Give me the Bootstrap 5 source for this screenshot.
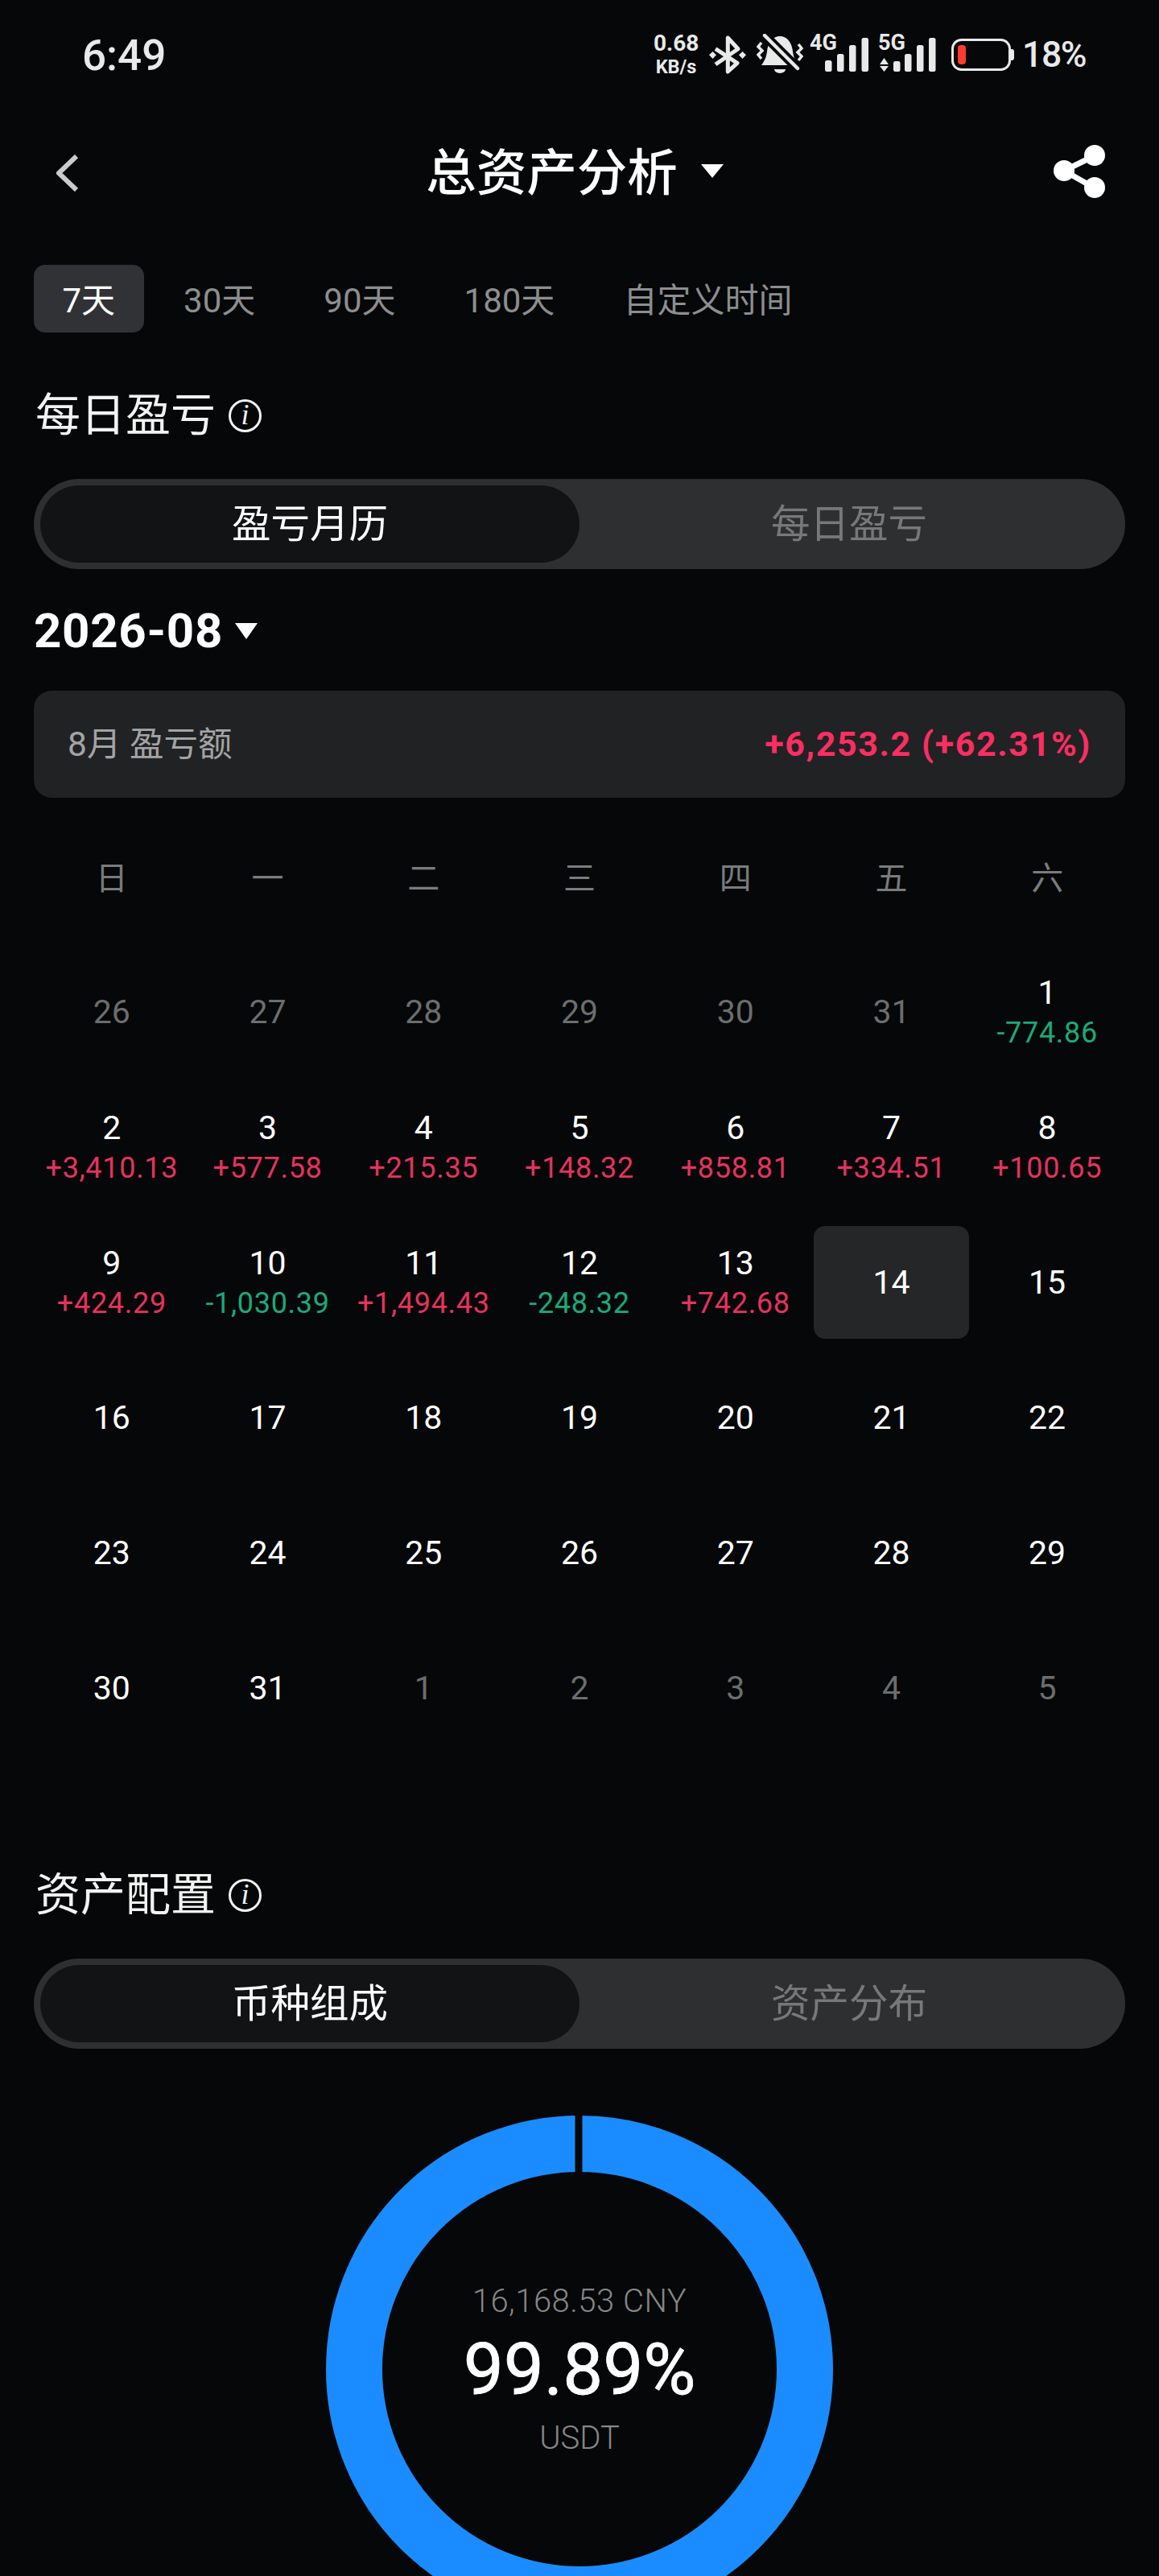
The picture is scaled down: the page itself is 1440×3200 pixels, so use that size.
<!DOCTYPE html>
<html lang="zh-CN">
<head>
  <meta charset="UTF-8">
  <title>总资产分析</title>
  <link href="https://cdn.jsdelivr.net/npm/bootstrap@5.3.3/dist/css/bootstrap.min.css" rel="stylesheet">
  <style>
    html, body { background: #050708; }
    body { font-family: Roboto, "Noto Sans CJK SC", sans-serif; color: #fff; }
    .app-page { height: 3200px; overflow: hidden; }

    /* status bar */
    .sbar { height: 167px; padding: 43px 92px 0 102px; color: #e8e9e9; }
    .sbar-time { font-size: 53px; font-weight: 500; line-height: 52px; }
    .sbar-speed { width: 56px; font-weight: 700; text-align: center; margin-right: 13px; }
    .sbar-speed div:first-child { font-size: 28px; line-height: 22px; }
    .sbar-speed div:last-child { font-size: 23.5px; line-height: 24px; margin-top: 6px; white-space: nowrap; }
    .sbar svg { display: block; fill: #e8e9e9; }
    .sbar svg text { font-family: Roboto, sans-serif; font-weight: 700; font-size: 27px; }
    .sig-ico { margin-top: -8px; }
    .sbar-pct { width: 78px; font-size: 44.5px; font-weight: 500; line-height: 46px; margin-left: 10px; margin-top: 2px; letter-spacing: -1.4px; white-space: nowrap; }

    /* header */
    .top-nav { height: 92px; padding: 0 65px 0 70px; }
    .top-side { flex: 1 1 0; }
    .top-back { margin-top: 4px; }
    .top-title { font-size: 62.5px; line-height: 70px; font-weight: 500; padding-right: 17px; margin-top: 5px; }
    .tri-down { width: 0; height: 0; border-style: solid; border-color: #fff transparent transparent; }
    .top-title-tri { border-width: 17px 14px 0; margin-left: 29px; margin-top: -6px; }
    .month-tri { border-width: 20px 14px 0; margin-left: 15px; }

    /* range tabs */
    .range-tabs { margin: 70px 42px 0; height: 84px; gap: 14px; }
    .range-tab { height: 84px; padding: 0 35.5px; font-size: 42px; line-height: 90px; color: #8c8e8f; border-radius: 14px; }
    .range-tab.is-on { background: #303235; color: #fff; }

    /* section title */
    .sec-title { margin: 73px 42px 0; padding-left: 2px; height: 60px; font-size: 56px; line-height: 60px; color: #f2f2f2; }
    .info-ico { width: 41px; height: 41px; border: 3.5px solid #f2f2f2; border-radius: 50%; margin-left: 16px;
      font: italic 36px/33px "Liberation Serif", serif; text-align: center; }

    /* segmented toggle */
    .seg { margin: 49px 42px 0; height: 112px; padding: 8px; background: #2e2f30; }
    .seg-item { flex: 1 1 0; font-size: 48.5px; color: #77787a; padding-top: 3px; }
    .seg-item.is-on { background: #121314; color: #fff; }

    /* month */
    .month-row { margin: 47px 42px 0; height: 60px; font-size: 60px; line-height: 60px; font-weight: 700; letter-spacing: .7px; }
    .sum-bar { margin: 44px 42px 0; height: 133px; padding: 0 42px; background: #212223; border-radius: 22px; }
    .sum-label { font-size: 42.5px; color: #a3a4a5; }
    .sum-amount { font-size: 43px; font-weight: 700; color: #fb2e62; letter-spacing: 1.6px; }

    /* calendar */
    .week-row { margin: 76px 42px 0; height: 50px; grid-template-columns: repeat(7, 1fr); font-size: 40px; line-height: 50px; color: #7a7b7c; }
    .cal-grid { margin: 70px 42px 0; grid-template-columns: repeat(7, 1fr); grid-auto-rows: 140px; row-gap: 28px; }
    .cal-cell { border-radius: 14px; }
    .cal-cell.is-today { background: #252627; }
    .cal-day { font-size: 41px; line-height: 46px; color: #fff; }
    .cal-cell.is-dim .cal-day { color: #6c6d6e; }
    .cal-val { font-size: 36px; line-height: 44px; letter-spacing: .7px; margin-top: 5px; white-space: nowrap; }
    .val-up { color: #e6325f; }
    .val-down { color: #1ba97c; }

    /* donut */
    .donut-box { width: 630px; height: 630px; margin: 83px auto 0; }
    .donut-text { top: 0; left: 0; width: 100%; height: 100%; }
    .donut-sub { font-size: 40px; line-height: 85px; font-weight: 300; color: #858687; }
    .donut-cny { letter-spacing: .5px; }
    .donut-big { font-size: 89px; line-height: 85px; font-weight: 400; color: #fff; -webkit-text-stroke: .8px #fff; }
  </style>
</head>
<body>
<div class="app-page">

  <div class="sbar d-flex justify-content-between align-items-start">
    <div class="sbar-time">6:49</div>
    <div class="d-flex align-items-start">
      <div class="sbar-speed"><div>0.68</div><div>KB/s</div></div>
      <svg width="46" height="50" viewBox="0 0 46 50" style="margin-right:13px">
        <path d="M8 17.7 35 35.3 23.3 46V4L36 17.7 8 37" fill="none" stroke="#e8e9e9" stroke-width="5" stroke-linejoin="round"/>
        <path d="M4.5 21 9 25.3 4.5 30 0 25.3ZM41.5 21 46 25.3 41.5 30 37 25.3Z"/>
      </svg>
      <svg width="58" height="50" viewBox="0 0 58 50" style="margin-right:8px;margin-top:-1px">
        <path d="M29 3C38 3 44 11 45 22 46 30 48 33 52 39H6C10 33 12 30 13 22 14 11 20 3 29 3Z"/>
        <path d="M22 44H36A7 5 0 0 1 22 44Z"/>
        <path d="M9 1 55 47" stroke="#050708" stroke-width="12"/>
        <path d="M10 2 51 43" stroke="#e8e9e9" stroke-width="4.5" stroke-linecap="round"/>
        <path d="M6 11 2 16 7 21 2 26 6 31M52 13 56 18 51 23 56 28 52 33" fill="none" stroke="#e8e9e9" stroke-width="3.5"/>
      </svg>
      <svg class="sig-ico" width="73" height="54" viewBox="0 -8 73 54" style="margin-right:12px">
        <text x="0" y="19">4G</text>
        <rect x="19" y="32" width="8.5" height="14" rx="2.5"/>
        <rect x="34" y="24" width="8.5" height="22" rx="2.5"/>
        <rect x="49" y="13" width="8.5" height="33" rx="2.5"/>
        <rect x="64.500" y="4" width="8.5" height="42" rx="2.5"/>
      </svg>
      <svg class="sig-ico" width="72" height="54" viewBox="0 -8 72 54" style="margin-right:19px">
        <text x="0" y="19">5G</text>
        <path d="M7.500 29 13 37H2ZM2 39H13L7.500 46Z"/>
        <rect x="19" y="33" width="8.5" height="13" rx="2.5"/>
        <rect x="33" y="24" width="8.5" height="22" rx="2.5"/>
        <rect x="48" y="13" width="8.5" height="33" rx="2.5"/>
        <rect x="63" y="4" width="8.5" height="42" rx="2.5"/>
      </svg>
      <svg width="78" height="42" viewBox="0 0 78 42" style="margin-top:5px">
        <rect x="1.5" y="1.5" width="71" height="37" rx="11" fill="none" stroke="#e8e9e9" stroke-width="3"/>
        <path d="M74 13H75A3 3 0 0 1 78 16V24A3 3 0 0 1 75 27H74Z"/>
        <rect x="8" y="8" width="10" height="24" rx="4" style="fill:#ff3b30"/>
      </svg>
      <div class="sbar-pct">18%</div>
    </div>
  </div>

  <div class="top-nav d-flex align-items-center">
    <div class="top-side">
      <svg width="28" height="46" viewBox="0 0 28 46" class="d-block top-back"><path d="M25 2 3 23 25 44" fill="none" stroke="#c9cbcc" stroke-width="6"/></svg>
    </div>
    <div class="top-title d-flex align-items-center"><span>总资产分析</span><span class="tri-down top-title-tri"></span></div>
    <div class="top-side d-flex justify-content-end">
      <svg width="68" height="68" viewBox="0 0 68 68" class="d-block" fill="#fff">
        <path d="M52 15 15 33 52 54" fill="none" stroke="#fff" stroke-width="7"/>
        <circle cx="53" cy="14" r="13"/><circle cx="15" cy="33" r="13"/><circle cx="53" cy="54" r="13"/>
      </svg>
    </div>
  </div>

  <div class="range-tabs d-flex">
    <div class="range-tab is-on">7天</div>
    <div class="range-tab">30天</div>
    <div class="range-tab">90天</div>
    <div class="range-tab">180天</div>
    <div class="range-tab">自定义时间</div>
  </div>

  <div class="sec-title d-flex align-items-center"><span>每日盈亏</span><span class="info-ico">i</span></div>

  <div class="seg d-flex rounded-pill">
    <div class="seg-item is-on rounded-pill d-flex align-items-center justify-content-center">盈亏月历</div>
    <div class="seg-item d-flex align-items-center justify-content-center">每日盈亏</div>
  </div>

  <div class="month-row d-flex align-items-center"><span>2026-08</span><span class="tri-down month-tri"></span></div>

  <div class="sum-bar d-flex align-items-center justify-content-between">
    <span class="sum-label">8月 盈亏额</span>
    <span class="sum-amount">+6,253.2 (+62.31%)</span>
  </div>

  <div class="week-row d-grid text-center">
    <div>日</div><div>一</div><div>二</div><div>三</div><div>四</div><div>五</div><div>六</div>
  </div>

  <div class="cal-grid d-grid text-center" id="calGrid"></div>

  <div class="sec-title d-flex align-items-center" style="margin-top:157px"><span>资产配置</span><span class="info-ico">i</span></div>

  <div class="seg d-flex rounded-pill">
    <div class="seg-item is-on rounded-pill d-flex align-items-center justify-content-center">币种组成</div>
    <div class="seg-item d-flex align-items-center justify-content-center">资产分布</div>
  </div>

  <div class="donut-box position-relative">
    <svg width="630" height="630" viewBox="0 0 630 630" class="d-block">
      <circle cx="315" cy="315" r="280" fill="none" stroke="#1a8cff" stroke-width="70"/>
      <rect x="309.500" y="0" width="9" height="71" fill="#050708"/>
    </svg>
    <div class="donut-text position-absolute d-flex flex-column align-items-center justify-content-center text-center">
      <div class="donut-sub donut-cny">16,168.53 CNY</div>
      <div class="donut-big">99.89%</div>
      <div class="donut-sub">USDT</div>
    </div>
  </div>
</div>

<script src="https://cdn.jsdelivr.net/npm/bootstrap@5.3.3/dist/js/bootstrap.bundle.min.js"></script>
<script>
  // [day, profit, flags]
  const days = [
    ['26', '', 'is-dim'], ['27', '', 'is-dim'], ['28', '', 'is-dim'], ['29', '', 'is-dim'], ['30', '', 'is-dim'], ['31', '', 'is-dim'], ['1', '-774.86'],
    ['2', '+3,410.13'], ['3', '+577.58'], ['4', '+215.35'], ['5', '+148.32'], ['6', '+858.81'], ['7', '+334.51'], ['8', '+100.65'],
    ['9', '+424.29'], ['10', '-1,030.39'], ['11', '+1,494.43'], ['12', '-248.32'], ['13', '+742.68'], ['14', '', 'is-today'], ['15'],
    ['16'], ['17'], ['18'], ['19'], ['20'], ['21'], ['22'],
    ['23'], ['24'], ['25'], ['26'], ['27'], ['28'], ['29'],
    ['30'], ['31'], ['1', '', 'is-dim'], ['2', '', 'is-dim'], ['3', '', 'is-dim'], ['4', '', 'is-dim'], ['5', '', 'is-dim']
  ];
  document.getElementById('calGrid').innerHTML = days.map(([day, val, flag]) => {
    const valHtml = val ? `<div class="cal-val ${val[0] === '+' ? 'val-up' : 'val-down'}">${val}</div>` : '';
    return `<div class="cal-cell ${flag || ''} d-flex flex-column align-items-center justify-content-center"><div class="cal-day">${day}</div>${valHtml}</div>`;
  }).join('');
</script>
</body>
</html>
